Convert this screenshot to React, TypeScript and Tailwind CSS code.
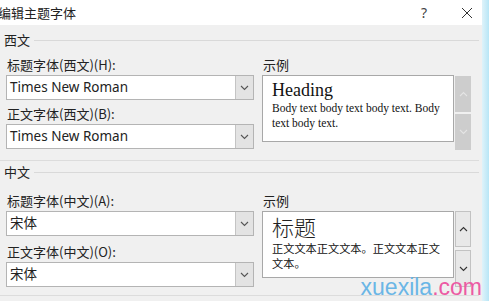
import React from "react";

const ui = { fontFamily: "'Noto Sans','Noto Sans CJK SC',sans-serif" };
const cjk = { fontFamily: "'Noto Sans CJK SC',sans-serif" };
const serif = { fontFamily: "'Liberation Serif','Noto Serif CJK SC',serif" };

function Chevron({ up = false, color = "#555" }: { up?: boolean; color?: string }) {
  return (
    <svg width="9" height="6" viewBox="0 0 9 6">
      <polyline
        points={up ? "1,5 4.5,1.5 8,5" : "1,1 4.5,4.5 8,1"}
        fill="none"
        stroke={color}
        strokeWidth="1.1"
      />
    </svg>
  );
}

function Combo({ value }: { value: string }) {
  return (
    <div className="flex h-[25px] w-[248px] border border-[#b4b4b4] bg-white">
      <div className="flex flex-1 items-center pl-[3px] text-[13.5px] text-[#222]" style={ui}>
        {value}
      </div>
      <div className="flex w-[18px] items-center justify-center border-l border-[#c4c4c4] bg-[#e3e3e3]">
        <Chevron />
      </div>
    </div>
  );
}

function Field({ label, value }: { label: string; value: string }) {
  return (
    <div className="flex flex-col">
      <div className="h-[19px] pl-[7px] text-[13px] leading-[18px] text-[#222]" style={cjk}>
        {label}
      </div>
      <div className="pl-[6px]">
        <Combo value={value} />
      </div>
    </div>
  );
}

function GroupHead({ title }: { title: string }) {
  return (
    <div className="flex h-[16px] items-center">
      <span className="pl-[4px] pr-[4px] text-[13px] leading-[16px] text-[#222]" style={cjk}>
        {title}
      </span>
      <div className="h-px flex-1 bg-[#d9d9d9]" />
    </div>
  );
}

export default function App() {
  return (
    <div className="relative flex h-[301px] w-[489px] overflow-hidden bg-[#f0f0f0]">
      <div className="flex w-[482px] flex-col">
        {/* title bar */}
        <div className="flex h-[25px] items-center bg-white">
          <span className="-ml-[2px] text-[13px] text-[#222]" style={cjk}>
            编辑主题字体
          </span>
          <span className="ml-auto mr-[34px] text-[14px] text-[#444]" style={ui}>
            ?
          </span>
          <svg className="mr-[9px]" width="12" height="12" viewBox="0 0 12 12">
            <path d="M1 1 L11 11 M11 1 L1 11" stroke="#333" strokeWidth="1" fill="none" />
          </svg>
        </div>

        {/* Western group */}
        <div className="mt-[7px] mr-[3px] flex flex-col">
          <GroupHead title="西文" />
          <div className="mt-[8px] flex">
            <div className="flex flex-col gap-[5px]">
              <Field label="标题字体(西文)(H):" value="Times New Roman" />
              <Field label="正文字体(西文)(B):" value="Times New Roman" />
            </div>
            <div className="ml-[8px] flex flex-col">
              <div className="h-[19px] pl-[1px] text-[13px] leading-[18px] text-[#222]" style={cjk}>
                示例
              </div>
              <div className="flex gap-[1px]">
                <div className="h-[67px] w-[192px] border border-[#a8a8a8] bg-white pl-[9px] pt-[4px]">
                  <div className="text-[18px] leading-[21px] text-[#111]" style={serif}>
                    Heading
                  </div>
                  <div className="whitespace-nowrap text-[11.5px] leading-[15px] text-[#111]" style={serif}>
                    Body text body text body text. Body
                    <br />
                    text body text.
                  </div>
                </div>
                <div className="flex w-[16px] flex-col gap-[2px] pt-[1px]">
                  <div className="flex h-[36px] items-center justify-center bg-[#cdcdcd]">
                    <Chevron up color="#e4e4e4" />
                  </div>
                  <div className="flex h-[36px] items-center justify-center bg-[#cdcdcd]">
                    <Chevron color="#e4e4e4" />
                  </div>
                </div>
              </div>
            </div>
          </div>
          <div className="mt-[10px] h-px bg-[#dcdcdc]" />
        </div>

        {/* Chinese group */}
        <div className="mt-[3px] mr-[3px] flex flex-col">
          <GroupHead title="中文" />
          <div className="mt-[12px] flex">
            <div className="flex flex-col gap-[7px]">
              <Field label="标题字体(中文)(A):" value="宋体" />
              <Field label="正文字体(中文)(O):" value="宋体" />
            </div>
            <div className="ml-[8px] flex flex-col">
              <div className="h-[19px] pl-[1px] text-[13px] leading-[18px] text-[#222]" style={cjk}>
                示例
              </div>
              <div className="flex gap-[1px]">
                <div className="h-[67px] w-[192px] border border-[#a8a8a8] bg-white pl-[9px] pt-[3px]" style={cjk}>
                  <div className="text-[22px] font-light leading-[22px] text-[#222]">标题</div>
                  <div className="mt-[4px] whitespace-nowrap text-[11.2px] leading-[15px] text-[#111]">
                    正文文本正文文本。正文文本正文
                    <br />
                    文本。
                  </div>
                </div>
                <div className="flex w-[16px] flex-col gap-[3px]">
                  <div className="flex h-[36px] items-center justify-center border border-[#c2c2c2] bg-[#e8e8e8]">
                    <Chevron up color="#333" />
                  </div>
                  <div className="flex h-[37px] items-center justify-center border border-[#c2c2c2] bg-[#e8e8e8]">
                    <Chevron color="#333" />
                  </div>
                </div>
              </div>
            </div>
          </div>
          <div className="mt-[8px] h-px bg-[#dcdcdc]" />
        </div>
      </div>

      {/* right window edge */}
      <div className="w-[7px] bg-gradient-to-r from-[#dff3fa] to-[#b8e6f6]" />

      {/* watermark */}
      <div
        className="absolute right-[7px] bottom-[2px] text-[23px] leading-[24px]"
        style={{ fontFamily: "'Liberation Sans',Arial,sans-serif" }}
      >
        <span className="text-[#6ab6e6]">xuexila</span>
        <span className="text-[#ec5aa3]">.com</span>
      </div>
    </div>
  );
}
